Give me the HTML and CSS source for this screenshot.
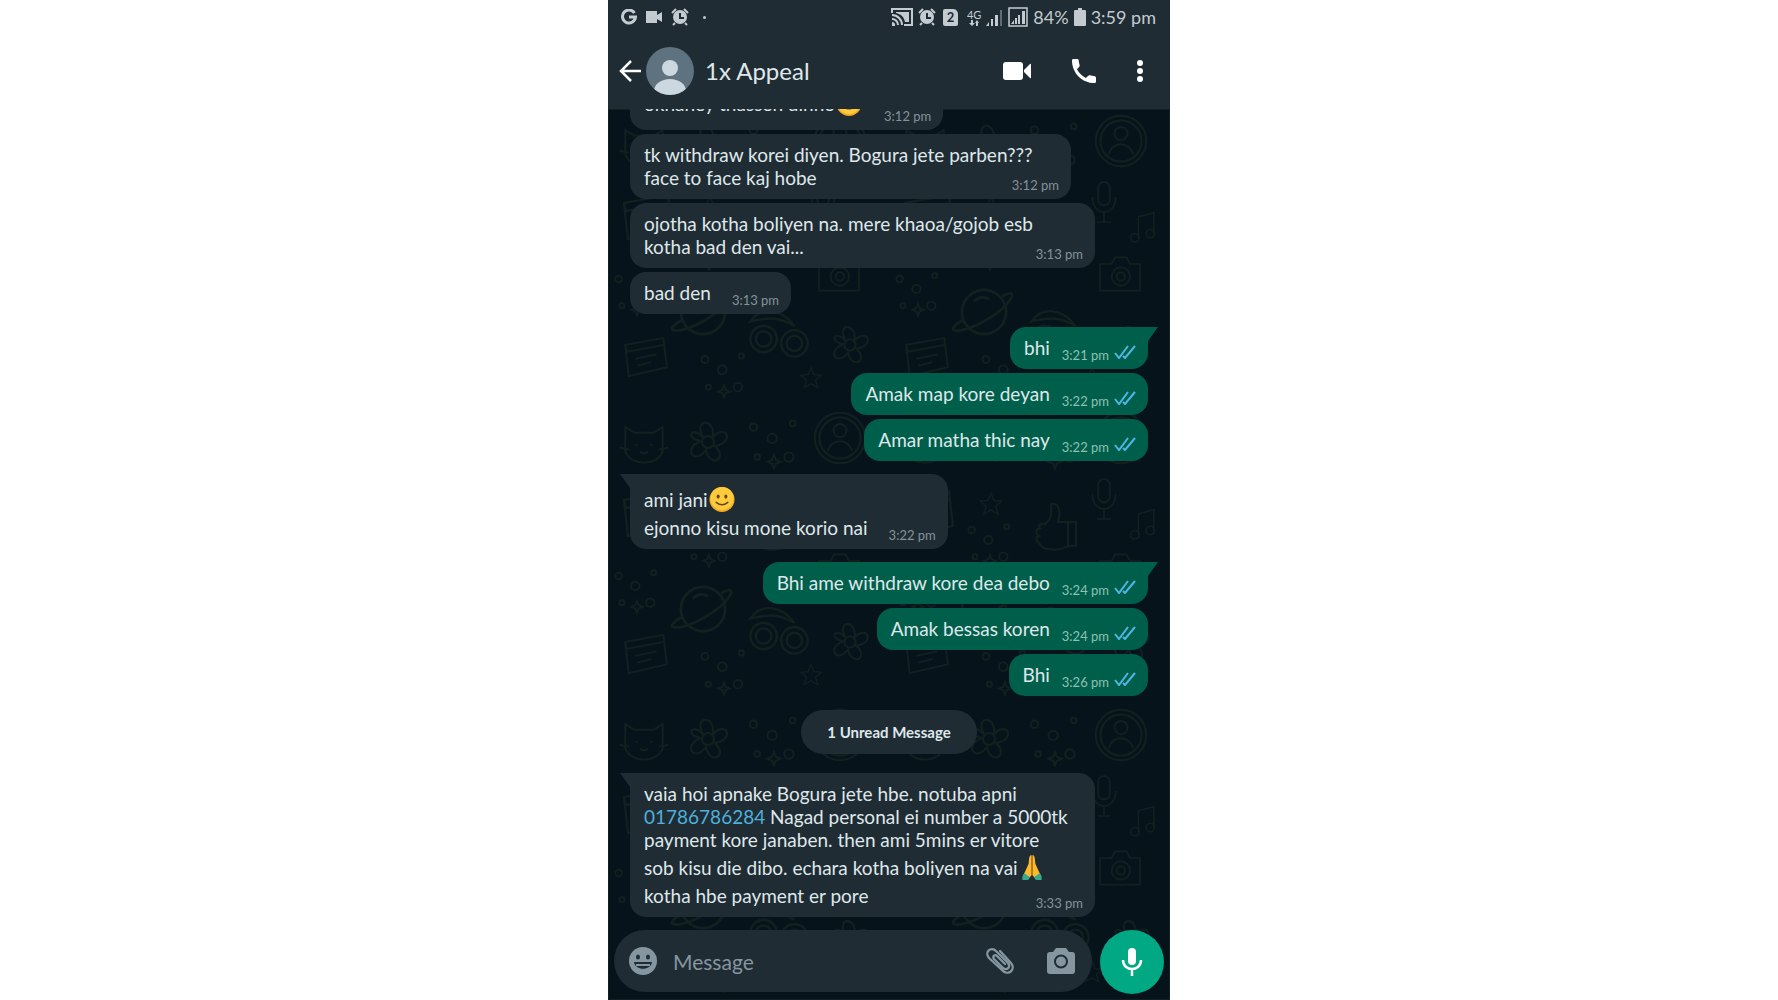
FILE: index.html
```html
<!DOCTYPE html>
<html lang="en">
<head>
    <meta charset="UTF-8">
    <meta name="viewport" content="width=device-width, initial-scale=1.0">
    <title>1x Appeal</title>
    <link rel="stylesheet" href="styles.css">
</head>
<body>
    <!-- shared icons -->
    <svg class="sprite" aria-hidden="true">
        <symbol id="ticks" viewBox="0 0 22 14">
            <path d="M1 8l4 5L14 1M9 11l2 2L21 1" fill="none" stroke="#4fb6e3" stroke-width="2"/>
        </symbol>
        <symbol id="alarm" viewBox="0 0 18 18">
            <path d="M1 5L5 1M17 5l-4-4M4 15l-2 2M14 15l2 2" stroke="currentColor" stroke-width="2"/>
            <circle cx="9" cy="9" r="7" fill="currentColor"/>
            <path d="M9 5v5h4" fill="none" stroke="#1f2c34" stroke-width="2"/>
        </symbol>
        <symbol id="smile" viewBox="0 0 28 28">
            <circle cx="14" cy="14" r="13" fill="#f6a821"/>
            <circle cx="14" cy="13" r="12" fill="#fdcb3c"/>
            <ellipse cx="10" cy="11" rx="1.6" ry="2.2" fill="#6b4312"/>
            <ellipse cx="18" cy="11" rx="1.6" ry="2.2" fill="#6b4312"/>
            <path d="M8 17q6 5 12 0" fill="none" stroke="#6b4312" stroke-width="1.6" stroke-linecap="round"/>
        </symbol>
        <symbol id="pray" viewBox="0 0 22 28">
            <path d="M10.500 1C8 1 8 5 7.500 10L4 18l-2 4 5 4 3.500-4zM11.500 1C14 1 14 5 14.500 10L18 18l2 4-5 4-3.500-4z" fill="#fdb92e"/>
            <path d="M11 2v20" stroke="#d98413" stroke-width="1"/>
            <path d="M3 20l6 4-2 3H1v-4zM19 20l-6 4 2 3h6v-4z" fill="#35a98c"/>
        </symbol>
        <!-- wallpaper doodles, each about 60 units wide -->
        <symbol id="d-mic" viewBox="0 0 60 60">
            <rect x="23" y="6" width="14" height="28" rx="7"/>
            <path d="M16 24c0 24 28 24 28 0M30 42v12M22 54h16"/>
        </symbol>
        <symbol id="d-thumb" viewBox="0 0 60 60">
            <path d="M22 26c8-6 6-14 6-20 8-2 10 8 7 18h10v24c-10 6-26 4-28-2-5-3-4-7-1-8-4-3-3-7 1-8-2-3 0-5 5-4zM45 24h8v24h-8"/>
        </symbol>
        <symbol id="d-star" viewBox="0 0 60 60">
            <path d="M30 12l5 12 13 1-10 9 4 13-12-7-12 7 4-13-10-9 13-1z"/>
        </symbol>
        <symbol id="d-camera" viewBox="0 0 60 60">
            <path d="M6 18h14l4-8h14l4 8h12v32H6z"/>
            <circle cx="31" cy="33" r="11"/>
            <circle cx="31" cy="33" r="5"/>
        </symbol>
        <symbol id="d-person" viewBox="0 0 60 60">
            <circle cx="30" cy="30" r="27"/>
            <circle cx="30" cy="30" r="22"/>
            <circle cx="30" cy="22" r="7"/>
            <path d="M17 44c3-14 22-14 26 0"/>
        </symbol>
        <symbol id="d-cat" viewBox="0 0 60 60">
            <path d="M10 12l10 6h20l10-6v26c-6 16-34 16-40 0zM22 30v2M38 30v2M26 38q4 4 8 0M4 34l10 2M56 34l-10 2"/>
        </symbol>
        <symbol id="d-planet" viewBox="0 0 60 60">
            <circle cx="30" cy="30" r="17"/>
            <path d="M14 36C-4 46 12 48 32 36s26-26 12-18M22 22c4-4 8-4 12-2"/>
        </symbol>
        <symbol id="d-book" viewBox="0 0 60 60">
            <path d="M6 16l44-8 4 34-44 10zM6 16l2 8 43-8M18 32l24-5M20 40l16-4"/>
        </symbol>
        <symbol id="d-bike" viewBox="0 0 60 60">
            <circle cx="16" cy="40" r="12"/>
            <circle cx="16" cy="40" r="7"/>
            <circle cx="44" cy="44" r="12"/>
            <circle cx="44" cy="44" r="7"/>
            <path d="M4 24c10-14 28-12 40 4-14-8-24-8-40-4z"/>
        </symbol>
        <symbol id="d-flower" viewBox="0 0 60 60">
            <circle cx="30" cy="30" r="6"/>
            <path d="M25 25c-10-18 12-20 10 0 14-14 22 6 2 9 14 14-6 22-9 4-12 16-24-2-5-9-16-2-10-16 2-4z"/>
        </symbol>
        <symbol id="d-note" viewBox="0 0 60 60">
            <path d="M22 44V14l22-6v30"/>
            <circle cx="17" cy="44" r="6"/>
            <circle cx="39" cy="38" r="6"/>
        </symbol>
        <symbol id="d-dots" viewBox="0 0 60 60">
            <circle cx="8" cy="12" r="4"/>
            <circle cx="28" cy="24" r="5"/>
            <circle cx="50" cy="8" r="3"/>
            <circle cx="12" cy="44" r="3"/>
            <circle cx="46" cy="44" r="5"/>
            <path d="M30 42l2 5 5 2-5 2-2 5-2-5-5-2 5-2z"/>
        </symbol>
    </svg>

    <div class="phone">
        <header>
            <div class="status-bar">
                <svg width="16" height="16" viewBox="0 0 16 16"><path d="M13.500 4A6.500 6.500 0 1 0 14.500 8H8" fill="none" stroke="currentColor" stroke-width="3"/></svg>
                <svg width="16" height="12" viewBox="0 0 16 12" fill="currentColor"><path d="M0 0h11v4l5-3v10l-5-3v4H0z"/></svg>
                <svg width="18" height="18"><use href="#alarm"/></svg>
                <span class="status-dot"></span>
                <div class="status-right">
                    <svg width="22" height="18" viewBox="0 0 22 18" fill="none" stroke="currentColor" stroke-width="2"><path d="M1 5V1h20v16h-8M1 7a10 10 0 0 1 10 10M1 11a6 6 0 0 1 6 6"/><path d="M1 14a3 3 0 0 1 3 4H1zM5 4h13v10h-4C13 9 10 6 5 5z" fill="currentColor" stroke="none"/></svg>
                    <svg width="18" height="18"><use href="#alarm"/></svg>
                    <span class="sim">2</span>
                    <span class="network">4G<svg width="10" height="6" viewBox="0 0 10 6" fill="currentColor"><path d="M2 0h2v3h2L3 6 0 3h2zM6 3l2-3 2 3H9v3H7V3z"/></svg></span>
                    <svg width="17" height="17" viewBox="0 0 17 17" fill="currentColor"><path d="M0 17l3-4v4zM5 10h2v7H5zM9 6h3v11H9z"/><path d="M14 1h2v16h-2z" opacity=".4"/></svg>
                    <svg width="20" height="20" viewBox="0 0 20 20" fill="currentColor"><path d="M1 1h18v18H1z" fill="none" stroke="currentColor" stroke-width="1.500"/><path d="M3 17l3-4v4zM7 11h2v6H7zM10 8h2v9h-2zM14 4h3v13h-3z"/></svg>
                    <span>84%</span>
                    <svg width="12" height="18" viewBox="0 0 12 18" fill="currentColor"><path d="M4 0h4v2h3q1 0 1 1v14q0 1-1 1H1q-1 0-1-1V3q0-1 1-1h3z"/></svg>
                    <time>3:59 pm</time>
                </div>
            </div>
            <div class="app-bar">
                <button class="back" aria-label="Back">
                    <svg width="22" height="22" viewBox="0 0 22 22" fill="none" stroke="currentColor" stroke-width="2.500"><path d="M22 11H2M12 1L2 11l10 10"/></svg>
                </button>
                <svg class="avatar" width="48" height="48" viewBox="0 0 48 48">
                    <clipPath id="round"><circle cx="24" cy="24" r="24"/></clipPath>
                    <circle cx="24" cy="24" r="24" fill="#5f7280"/>
                    <circle cx="24" cy="21" r="8" fill="#ccd8df"/>
                    <ellipse cx="24" cy="44" rx="16" ry="12" fill="#ccd8df" clip-path="url(#round)"/>
                </svg>
                <h1>1x Appeal</h1>
                <button aria-label="Video call">
                    <svg width="28" height="20" viewBox="0 0 28 20" fill="currentColor"><rect y="1" width="20" height="18" rx="3"/><path d="M21 9l6-6q1-1 1 1v12q0 2-1 1l-6-6z"/></svg>
                </button>
                <button aria-label="Voice call">
                    <svg width="24" height="24" viewBox="0 0 24 24" fill="currentColor"><path d="M1.300 0H5.300Q6.500 0 6.700 1.300C6.800 3 7.100 4.500 7.600 6Q7.900 7 7.200 7.700L5 10.300C7 14 10 17 13.800 19L16.300 16.700Q17 16 18 16.300C19.500 16.800 21 17 22.700 17.200Q24 17.400 24 18.600V22.500Q24 24 22.600 24C10 24 0 14 0 1.400Q0 0 1.300 0z"/></svg>
                </button>
                <button aria-label="More options">
                    <svg width="6" height="22" viewBox="0 0 6 22" fill="currentColor"><circle cx="3" cy="3" r="3"/><circle cx="3" cy="11" r="3"/><circle cx="3" cy="19" r="3"/></svg>
                </button>
            </div>
        </header>

        <main>
            <svg class="wallpaper" viewBox="0 0 562 891" preserveAspectRatio="xMidYMin slice" aria-hidden="true">
                <defs>
                    <pattern id="doodles" width="281" height="297" patternUnits="userSpaceOnUse">
                        <use href="#d-person" x="204" y="4" width="56" height="56"/>
                        <use href="#d-cat" x="8" y="10" width="56" height="56"/>
                        <use href="#d-flower" x="70" y="6" width="60" height="60"/>
                        <use href="#d-dots" x="138" y="10" width="56" height="56"/>
                        <use href="#d-book" x="10" y="78" width="60" height="60"/>
                        <use href="#d-star" x="84" y="80" width="36" height="36"/>
                        <use href="#d-thumb" x="134" y="92" width="60" height="60"/>
                        <use href="#d-mic" x="190" y="68" width="50" height="50"/>
                        <use href="#d-dots" x="76" y="114" width="50" height="50"/>
                        <use href="#d-note" x="234" y="98" width="42" height="42"/>
                        <use href="#d-camera" x="206" y="140" width="50" height="50"/>
                        <use href="#d-planet" x="56" y="164" width="78" height="78"/>
                        <use href="#d-dots" x="4" y="160" width="50" height="50"/>
                        <use href="#d-bike" x="138" y="186" width="66" height="66"/>
                        <use href="#d-book" x="12" y="222" width="52" height="52"/>
                        <use href="#d-flower" x="214" y="208" width="56" height="56"/>
                        <use href="#d-star" x="186" y="252" width="34" height="34"/>
                        <use href="#d-dots" x="90" y="240" width="52" height="52"/>
                    </pattern>
                </defs>
                <rect width="562" height="891" fill="url(#doodles)"/>
            </svg>

            <ol class="messages">
                <li class="message in"><p>okhaney thassen dinno<svg class="emoji"><use href="#smile"/></svg></p><time>3:12 pm</time></li>
                <li class="message in wide"><p>tk withdraw korei diyen. Bogura jete parben???<br>face to face kaj hobe</p><time>3:12 pm</time></li>
                <li class="message in wide full"><p>ojotha kotha boliyen na. mere khaoa/gojob esb<br>kotha bad den vai...</p><time>3:13 pm</time></li>
                <li class="message in"><p>bad den</p><time>3:13 pm</time></li>

                <li class="message out first"><p>bhi</p><time>3:21 pm</time><svg class="ticks"><use href="#ticks"/></svg></li>
                <li class="message out"><p>Amak map kore deyan</p><time>3:22 pm</time><svg class="ticks"><use href="#ticks"/></svg></li>
                <li class="message out"><p>Amar matha thic nay</p><time>3:22 pm</time><svg class="ticks"><use href="#ticks"/></svg></li>

                <li class="message in first"><p>ami jani<svg class="emoji"><use href="#smile"/></svg><br>ejonno kisu mone korio nai</p><time>3:22 pm</time></li>

                <li class="message out first"><p>Bhi ame withdraw kore dea debo</p><time>3:24 pm</time><svg class="ticks"><use href="#ticks"/></svg></li>
                <li class="message out"><p>Amak bessas koren</p><time>3:24 pm</time><svg class="ticks"><use href="#ticks"/></svg></li>
                <li class="message out"><p>Bhi</p><time>3:26 pm</time><svg class="ticks"><use href="#ticks"/></svg></li>

                <li class="unread">1 Unread Message</li>

                <li class="message in first wide full"><p>vaia hoi apnake Bogura jete hbe. notuba apni<br><a href="tel:01786786284">01786786284</a> Nagad personal ei number a 5000tk<br>payment kore janaben. then ami 5mins er vitore<br>sob kisu die dibo. echara kotha boliyen na vai<svg class="emoji"><use href="#pray"/></svg><br>kotha hbe payment er pore</p><time>3:33 pm</time></li>
            </ol>

            <form class="composer">
                <div class="field">
                    <button type="button" aria-label="Emoji">
                        <svg width="28" height="28" viewBox="0 0 28 28"><circle cx="14" cy="14" r="14" fill="currentColor"/><g fill="#1f2c34"><ellipse cx="9" cy="10" rx="2" ry="2.500"/><ellipse cx="19" cy="10" rx="2" ry="2.500"/><path d="M5 15h18c-1 9-17 9-18 0z"/></g><path d="M7 18h14" stroke="currentColor" stroke-width="2"/></svg>
                    </button>
                    <input type="text" placeholder="Message" aria-label="Message">
                    <button type="button" aria-label="Attach">
                        <svg width="30" height="28" viewBox="0 0 30 28" fill="none" stroke="currentColor" stroke-width="2.300" stroke-linecap="round" stroke-linejoin="round"><path d="M15 4l11 12c5 6-2 13-8 8L4 11C-1 5 6-1 11 4l12 12c3 4-1 8-5 5L9 12c-2-3 1-5 3-3l8 8"/></svg>
                    </button>
                    <button type="button" aria-label="Camera">
                        <svg width="28" height="26" viewBox="0 0 28 26"><path d="M9 0h10l3 4h3q3 0 3 3v16q0 3-3 3H3q-3 0-3-3V7q0-3 3-3h3z" fill="currentColor"/><circle cx="14" cy="13.500" r="6" fill="none" stroke="#1f2c34" stroke-width="2"/></svg>
                    </button>
                </div>
                <button type="button" class="record" aria-label="Record voice message">
                    <svg width="22" height="28" viewBox="0 0 22 28"><rect x="7" width="8" height="17" rx="4" fill="currentColor"/><path d="M2 12c0 12 18 12 18 0M11 21v7" fill="none" stroke="currentColor" stroke-width="2.500"/></svg>
                </button>
            </form>
        </main>
    </div>
</body>
</html>
```
FILE: styles.css
```css
* {
    box-sizing: border-box;
}
body {
    margin: 0;
    background-color: #fff;
    font-family: Lato, "Noto Sans", sans-serif;
}
.sprite {
    position: absolute;
    width: 0;
    height: 0;
}
.phone {
    display: flex;
    flex-direction: column;
    width: 100%;
    max-width: 562px;
    height: 100vh;
    margin: 0 auto;
    overflow: hidden;
    background-color: #06131a;
    color: #dfe7ea;
}
button {
    display: flex;
    padding: 0;
    border: 0;
    background: none;
    color: inherit;
    cursor: pointer;
}

/* header */
header {
    flex: none;
    background-color: #1f2c34;
}
.status-bar {
    display: flex;
    align-items: center;
    gap: 9px;
    height: 34px;
    padding: 0 14px 0 13px;
    color: #c3cbd0;
    font-size: 18px;
}
.status-dot {
    width: 3px;
    height: 3px;
    margin-left: 5px;
    border-radius: 50%;
    background-color: currentColor;
}
.status-right {
    display: flex;
    align-items: center;
    gap: 5px;
    margin-left: auto;
}
.sim {
    width: 15px;
    margin: 0 4px 0 2px;
    border-radius: 2px 5px 2px 2px;
    background-color: #c3cbd0;
    color: #1f2c34;
    font-size: 13px;
    font-weight: bold;
    line-height: 17px;
    text-align: center;
}
.network {
    display: flex;
    flex-direction: column;
    align-items: center;
    font-size: 11px;
    line-height: 11px;
}
.app-bar {
    display: flex;
    align-items: center;
    gap: 41px;
    height: 75px;
    padding: 0 27px 2px 11px;
    color: #fff;
}
.back {
    margin-right: -36px;
}
.avatar {
    flex: none;
    margin-right: -30px;
}
h1 {
    flex: 1;
    margin: 0;
    color: #dfe7ea;
    font-size: 24px;
    font-weight: normal;
}

/* conversation */
main {
    position: relative;
    display: flex;
    flex: 1;
    flex-direction: column;
    justify-content: flex-end;
    min-height: 0;
}
.wallpaper {
    position: absolute;
    inset: 0;
    width: 100%;
    height: 100%;
    fill: none;
    stroke: #12201f;
    stroke-width: 2;
}
.messages {
    position: relative;
    display: flex;
    flex: 1;
    flex-direction: column;
    justify-content: flex-end;
    gap: 4px;
    min-height: 0;
    margin: 0;
    padding: 0 22px 13px;
    overflow: hidden;
    list-style: none;
}
.message {
    position: relative;
    display: flex;
    flex: none;
    align-items: flex-end;
    padding: 9px 12px 10px 14px;
    border-radius: 16px;
    font-size: 19px;
    line-height: 23px;
}
.message p {
    margin: 0;
    white-space: nowrap;
}
.message time {
    margin-bottom: -6px;
    font-size: 13px;
    line-height: 20px;
}
.message a {
    color: #4fb0dc;
    text-decoration: none;
}
.in {
    align-self: flex-start;
    gap: 21px;
    background-color: #1f2c34;
}
.in time {
    color: #84929a;
}
.out {
    align-self: flex-end;
    gap: 12px;
    background-color: #005f4b;
}
.out time {
    color: #8fc0b3;
}
.first {
    margin-top: 9px;
}
.in.first {
    border-top-left-radius: 0;
}
.out.first {
    border-top-right-radius: 0;
}
.first::before {
    content: "";
    position: absolute;
    top: 0;
    width: 10px;
    height: 14px;
    background-color: inherit;
}
.in.first::before {
    right: 100%;
    clip-path: polygon(0 0, 100% 0, 100% 100%);
}
.out.first::before {
    left: 100%;
    clip-path: polygon(0 0, 100% 0, 0 100%);
}

/* the time shares the last line's row with the text */
.wide {
    display: grid;
    min-width: 441px;
}
.wide p,
.wide time {
    grid-area: 1 / 1;
}
.wide time {
    place-self: end;
}
.full {
    width: 100%;
    max-width: 465px;
}
.ticks {
    width: 22px;
    height: 14px;
    margin-left: -7px;
}
.emoji {
    width: 28px;
    height: 27px;
    margin: 3px 0;
    vertical-align: -9px;
}
.unread {
    flex: none;
    align-self: center;
    margin: 10px 0 6px;
    padding: 0 26px;
    border-radius: 22px;
    background-color: #1f2c34;
    font-size: 15px;
    font-weight: bold;
    line-height: 44px;
}

/* composer */
.composer {
    position: relative;
    display: flex;
    flex: none;
    gap: 8px;
    padding: 0 6px 6px;
}
.field {
    display: flex;
    flex: 1;
    align-items: center;
    gap: 32px;
    height: 62px;
    padding: 0 17px 0 15px;
    border-radius: 31px;
    background-color: #1f2c34;
    color: #8696a0;
}
.field input {
    flex: 1;
    min-width: 0;
    margin-left: -16px;
    padding: 0;
    border: 0;
    outline: 0;
    background: none;
    color: #dfe7ea;
    font: inherit;
    font-size: 21px;
}
.field input::placeholder {
    color: #8696a0;
    opacity: 1;
}
.record {
    align-items: center;
    justify-content: center;
    width: 64px;
    height: 64px;
    border-radius: 50%;
    background-color: #00a884;
    color: #fff;
}
```
